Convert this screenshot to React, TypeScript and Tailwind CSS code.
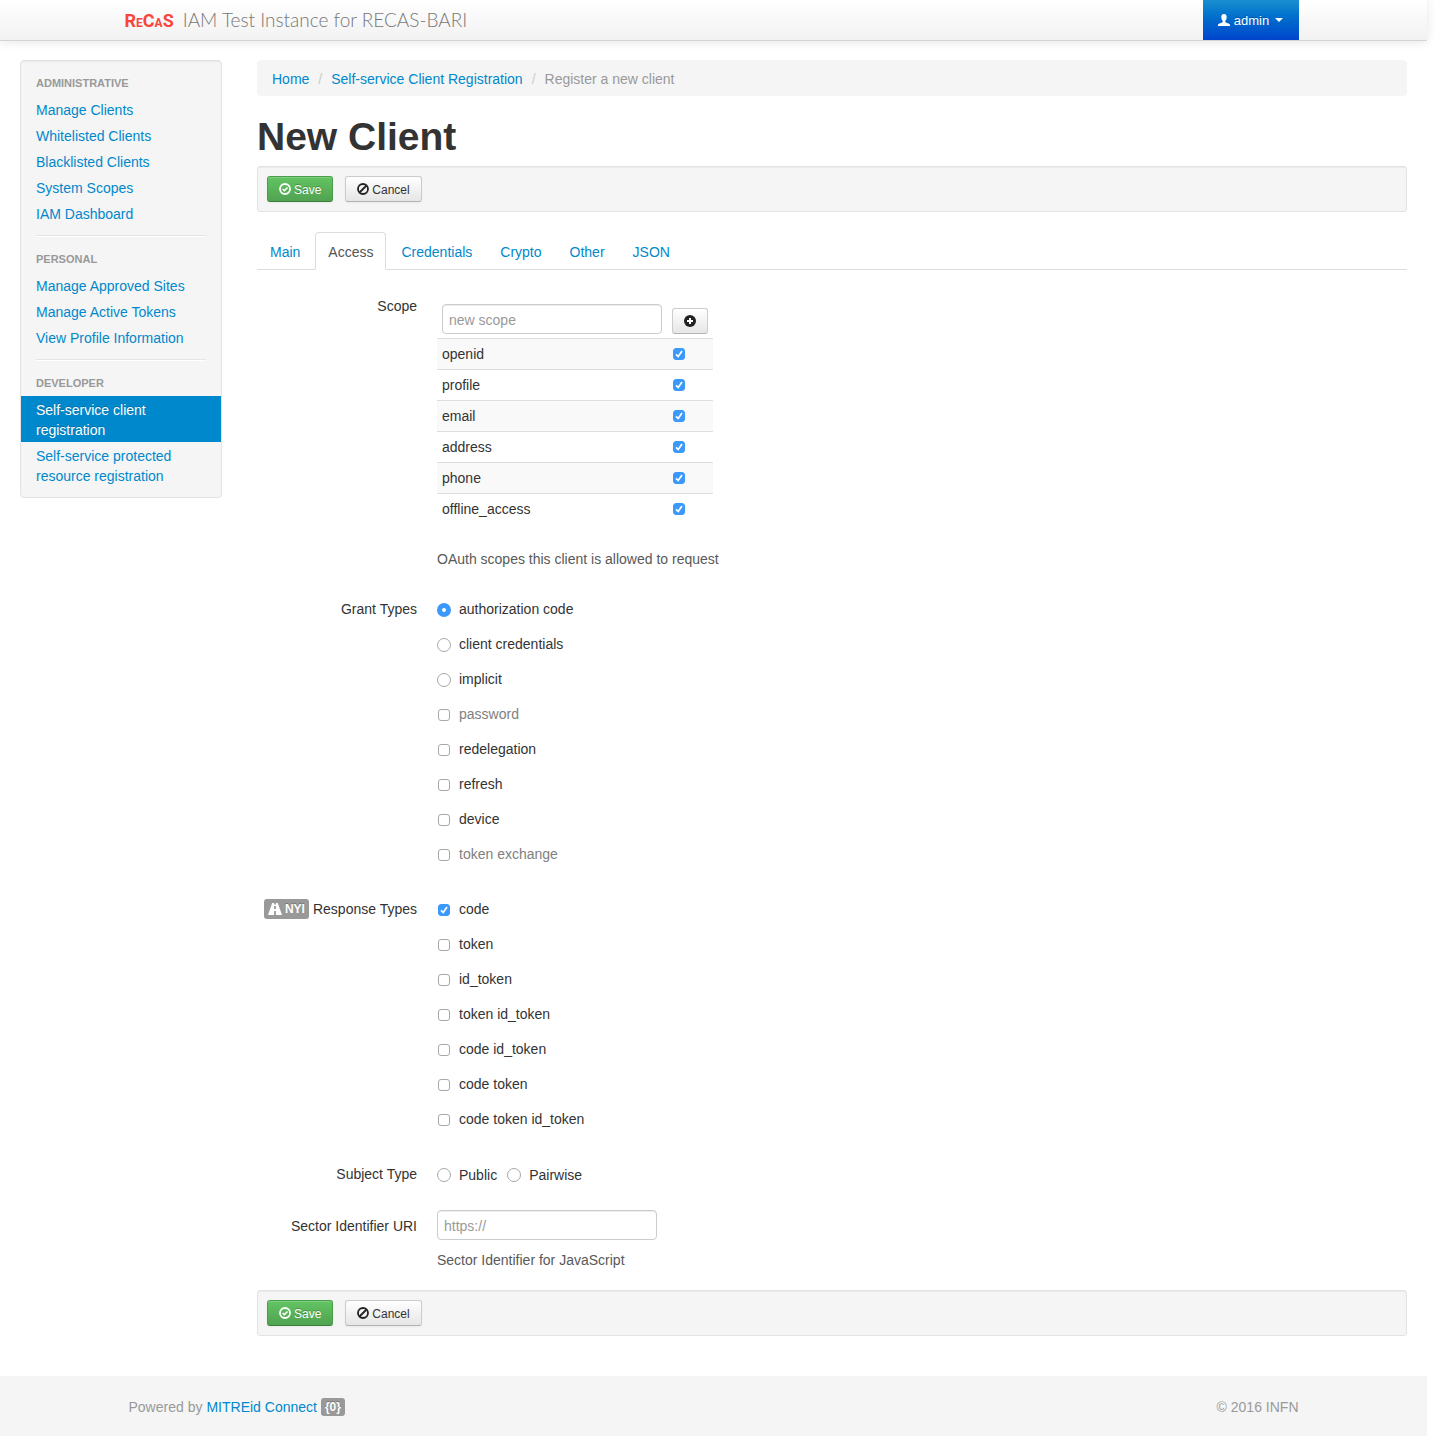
import React from "react";

const linkCls = "text-[#0088cc] hover:text-[#005580] hover:underline";

function UserIcon() {
  return (
    <svg className="h-3 w-3" viewBox="0 0 12 12" fill="#fff" aria-hidden="true">
      <path d="M6 0C4.300 0 3.300 1.200 3.300 2.900c0 1.700.7 3.300 1.500 4.100 0 .8-.1 1.200-.8 1.500C2.400 9.200.3 9.700 0 10.800V12h12v-1.200c-.3-1.100-2.400-1.600-4-2.300-.7-.3-.8-.7-.8-1.500.8-.8 1.500-2.400 1.500-4.100C8.700 1.200 7.700 0 6 0z" />
    </svg>
  );
}

function OkCircleIcon() {
  return (
    <svg className="h-3 w-3" viewBox="0 0 12 12" fill="none" stroke="#fff" aria-hidden="true">
      <circle cx="6" cy="6" r="5" strokeWidth="1.800" />
      <path d="M3.600 6l1.800 1.700L8.500 4.500" strokeWidth="1.600" />
    </svg>
  );
}

function BanIcon() {
  return (
    <svg className="h-3 w-3" viewBox="0 0 12 12" fill="none" stroke="#222" strokeWidth="1.800" aria-hidden="true">
      <circle cx="6" cy="6" r="5" />
      <path d="M2.500 9.500l7-7" />
    </svg>
  );
}

function PlusIcon() {
  return (
    <svg className="h-3 w-3" viewBox="0 0 12 12" aria-hidden="true">
      <circle cx="6" cy="6" r="6" fill="#222" />
      <path d="M6 3v6M3 6h6" stroke="#fff" strokeWidth="2" />
    </svg>
  );
}

function RoadIcon() {
  return (
    <svg className="h-3 w-3.5" viewBox="0 0 14 12" aria-hidden="true">
      <path d="M4.200 0h5.600L14 12H0z" fill="#fff" />
      <path d="M7 0v1.500M7 3v3M7 8v4" stroke="#999" strokeWidth="1.800" />
    </svg>
  );
}

function Check(props: React.InputHTMLAttributes<HTMLInputElement>) {
  return (
    <span className="grid h-3 w-3 shrink-0">
      <input
        type="checkbox"
        className="peer col-start-1 row-start-1 h-3 w-3 appearance-none rounded-[3px] border border-[#a8a8a8] bg-white checked:border-[#3b99fc] checked:bg-[#3b99fc]"
        {...props}
      />
      <svg
        className="pointer-events-none col-start-1 row-start-1 hidden h-3 w-3 peer-checked:block"
        viewBox="0 0 12 12"
        fill="none"
        stroke="#fff"
        strokeWidth="1.700"
        aria-hidden="true"
      >
        <path d="M3 6.300l2.200 2.200 3.800-5.600" />
      </svg>
    </span>
  );
}

function Radio(props: React.InputHTMLAttributes<HTMLInputElement>) {
  return (
    <input
      type="radio"
      className="h-3.5 w-3.5 shrink-0 appearance-none rounded-full border border-[#a8a8a8] bg-white checked:border-[5px] checked:border-[#3b99fc]"
      {...props}
    />
  );
}

function Actions() {
  return (
    <div className="flex gap-3 rounded-[3px] border border-[#e3e3e3] bg-[#f5f5f5] p-[9px] shadow-[inset_0_1px_1px_rgba(0,0,0,0.05)]">
      <button className="flex h-[26px] items-center gap-[3px] rounded-[3px] border border-[#4a9e4a] border-b-[#3a803a] bg-linear-to-b from-[#62c462] to-[#51a351] px-[11px] text-xs text-white shadow-[inset_0_1px_0_rgba(255,255,255,0.2),0_1px_2px_rgba(0,0,0,0.05)] [text-shadow:0_-1px_0_rgba(0,0,0,0.25)]">
        <OkCircleIcon />
        <span className="pt-px">Save</span>
      </button>
      <button className="flex h-[26px] items-center gap-[3px] rounded-[3px] border border-[#cccccc] border-b-[#b3b3b3] bg-linear-to-b from-white to-[#e6e6e6] px-[11px] text-xs text-[#333] shadow-[inset_0_1px_0_rgba(255,255,255,0.2),0_1px_2px_rgba(0,0,0,0.05)]">
        <BanIcon />
        <span className="pt-px">Cancel</span>
      </button>
    </div>
  );
}

const menu = [
  {
    title: "Administrative",
    items: ["Manage Clients", "Whitelisted Clients", "Blacklisted Clients", "System Scopes", "IAM Dashboard"],
  },
  { title: "Personal", items: ["Manage Approved Sites", "Manage Active Tokens", "View Profile Information"] },
  { title: "Developer", items: ["Self-service client registration", "Self-service protected resource registration"] },
];

function Sidebar() {
  return (
    <nav className="w-[202px] shrink-0 rounded-[4px] border border-[#e3e3e3] bg-[#f5f5f5] py-[9px] shadow-[inset_0_1px_1px_rgba(0,0,0,0.05)]">
      {menu.map((group, i) => (
        <section key={group.title}>
          {i > 0 && <hr className="mx-[15px] my-[9px] h-0.5 border-0 border-t border-[#e5e5e5] bg-white" />}
          <h2 className="px-[15px] py-[3px] text-[11px] leading-5 font-bold text-[#999] uppercase">{group.title}</h2>
          <ul>
            {group.items.map((item) => (
              <li key={item}>
                <a
                  href="#"
                  className={
                    item === "Self-service client registration"
                      ? "block bg-[#0088cc] px-[15px] pt-1 pb-0.5 text-white [text-shadow:0_-1px_0_rgba(0,0,0,0.2)]"
                      : "block px-[15px] pt-1 pb-0.5 text-[#0088cc] hover:text-[#005580]"
                  }
                >
                  {item}
                </a>
              </li>
            ))}
          </ul>
        </section>
      ))}
    </nav>
  );
}

function Group({ label, children }: { label: React.ReactNode; children: React.ReactNode }) {
  return (
    <div className="mb-5 flex gap-5">
      <div className="flex w-40 shrink-0 items-start justify-end gap-1 pt-[5px]">{label}</div>
      <div className="min-w-0 flex-1">{children}</div>
    </div>
  );
}

const scopes = ["openid", "profile", "email", "address", "phone", "offline_access"];
const grants = [
  "authorization code",
  "client credentials",
  "implicit",
  "password",
  "redelegation",
  "refresh",
  "device",
  "token exchange",
];
const responses = ["code", "token", "id_token", "token id_token", "code id_token", "code token", "code token id_token"];
const tabs = ["Main", "Access", "Credentials", "Crypto", "Other", "JSON"];
const inputCls =
  "h-[30px] w-[220px] rounded-[4px] border border-[#cccccc] bg-white px-1.5 pt-0.5 text-sm text-[#555] shadow-[inset_0_1px_1px_rgba(0,0,0,0.075)] placeholder:text-[#999]";

function AccessForm() {
  return (
    <form className="pt-[21px]">
      <Group label={<span>Scope</span>}>
        <table className="mt-2 w-[276px] border-collapse">
          <thead>
            <tr>
              <th className="px-[5px] pt-[5px] pb-1 text-left align-top font-normal">
                <input aria-label="New scope" placeholder="new scope" className={inputCls} />
              </th>
              <th className="px-[5px] pb-1 text-left align-bottom">
                <button
                  type="button"
                  aria-label="Add scope"
                  className="flex h-[26px] w-9 items-center justify-center rounded-[3px] border border-[#cccccc] border-b-[#b3b3b3] bg-linear-to-b from-white to-[#e6e6e6]"
                >
                  <PlusIcon />
                </button>
              </th>
            </tr>
          </thead>
          <tbody>
            {scopes.map((s) => (
              <tr key={s} className="border-t border-[#dddddd] odd:bg-[#f9f9f9]">
                <td className="px-[5px] py-[5px]">
                  <label htmlFor={"scope-" + s}>{s}</label>
                </td>
                <td className="px-1.5 py-[5px]">
                  <Check id={"scope-" + s} defaultChecked />
                </td>
              </tr>
            ))}
          </tbody>
        </table>
        <p className="mt-[25px] pb-[5px] text-[#595959]">OAuth scopes this client is allowed to request</p>
      </Group>

      <Group label={<span>Grant Types</span>}>
        {grants.map((g, i) => {
          const disabled = g === "password" || g === "token exchange";
          return (
            <label
              key={g}
              className={
                disabled
                  ? "mb-2.5 flex items-center pt-[5px] text-[#808080]"
                  : "mb-2.5 flex items-center pt-[5px]"
              }
            >
              <span className="flex h-5 w-[22px] items-center pt-0.5">
                {i < 3 ? (
                  <Radio name="grant" defaultChecked={i === 0} />
                ) : (
                  <span className="pl-px">
                    <Check disabled={disabled} />
                  </span>
                )}
              </span>
              {g}
            </label>
          );
        })}
      </Group>

      <Group
        label={
          <>
            <span className="flex h-5 items-center gap-[3px] rounded-[3px] bg-[#999] px-1 text-xs font-bold text-white [text-shadow:0_-1px_0_rgba(0,0,0,0.25)]">
              <RoadIcon />
              NYI
            </span>
            <span className="whitespace-nowrap">Response Types</span>
          </>
        }
      >
        {responses.map((r, i) => (
          <label key={r} className="mb-2.5 flex items-center pt-[5px]">
            <span className="flex h-5 w-[22px] items-center pt-0.5 pl-px">
              <Check defaultChecked={i === 0} />
            </span>
            {r}
          </label>
        ))}
      </Group>

      <Group label={<span>Subject Type</span>}>
        <div className="flex h-[31px] gap-2.5 pt-1.5">
          {["Public", "Pairwise"].map((s) => (
            <label key={s} className="flex items-start gap-2">
              <span className="flex h-5 items-center">
                <Radio name="subject" />
              </span>
              {s}
            </label>
          ))}
        </div>
      </Group>

      <Group
        label={
          <label htmlFor="sector" className="pt-px">
            Sector Identifier URI
          </label>
        }
      >
        <input id="sector" placeholder="https://" className={"block " + inputCls} />
        <p className="mt-2.5 text-[#595959]">Sector Identifier for JavaScript</p>
      </Group>
    </form>
  );
}

export default function App() {
  return (
    <div className="bg-white pr-[15px] font-['Liberation_Sans',Arial,sans-serif] text-sm leading-5 text-[#333]">
      <header className="border-b border-[#d4d4d4] bg-linear-to-b from-white to-[#f2f2f2] shadow-[0_1px_10px_rgba(0,0,0,0.1)]">
        <div className="mx-auto flex h-10 max-w-[1170px] justify-between">
          <a href="#" className="-ml-1 flex items-baseline gap-[9px] pt-2.5">
            <span className="font-[Roboto,sans-serif] text-lg leading-5 font-bold text-[#f9453a]">
              R<span className="text-xs">E</span>C<span className="text-xs">A</span>S
            </span>
            <span className="font-[Lato,sans-serif] text-[19px] leading-5 font-light text-[#777]">
              IAM Test Instance for RECAS-BARI
            </span>
          </a>
          <button className="flex w-24 items-center justify-center gap-1 bg-linear-to-b from-[#1a8fd0] via-[#0069cc] to-[#0044cc] text-[13px] text-white [text-shadow:0_-1px_0_rgba(0,0,0,0.25)]">
            <UserIcon />
            <span className="pt-px">admin</span>
            <svg className="ml-0.5 h-1 w-2" viewBox="0 0 8 4" fill="#fff" aria-hidden="true">
              <path d="M0 0h8L4 4z" />
            </svg>
          </button>
        </div>
      </header>

      <div className="flex items-start gap-[35px] px-5 pt-[19px]">
        <Sidebar />
        <main className="min-w-0 flex-1">
          <nav aria-label="Breadcrumb" className="flex rounded-[4px] bg-[#f5f5f5] px-[15px] pt-[9px] pb-[7px]">
            <a href="#" className={linkCls}>
              Home
            </a>
            <span className="px-[9px] text-[#ccc]">/</span>
            <a href="#" className={linkCls}>
              Self-service Client Registration
            </a>
            <span className="px-[9px] text-[#ccc]">/</span>
            <span className="text-[#999]">Register a new client</span>
          </nav>
          <h1 className="mt-[21px] mb-[9px] text-[39px] leading-10 font-bold">New Client</h1>
          <Actions />
          <div role="tablist" className="mt-5 flex gap-0.5 border-b border-[#dddddd]">
            {tabs.map((t) => (
              <button
                key={t}
                role="tab"
                aria-selected={t === "Access"}
                className={
                  t === "Access"
                    ? "-mb-px rounded-t-[4px] border border-[#dddddd] border-b-white bg-white px-3 pt-[9px] pb-[7px] text-[#555]"
                    : "-mb-px border border-transparent px-3 pt-[9px] pb-[7px] text-[#0088cc]"
                }
              >
                {t}
              </button>
            ))}
          </div>
          <AccessForm />
          <Actions />
        </main>
      </div>

      <footer className="mt-10 bg-[#f5f5f5] pt-[21px] pb-[19px] text-[#999]">
        <div className="mx-auto flex max-w-[1170px] justify-between">
          <p className="flex items-center gap-1">
            Powered by
            <a href="#" className="flex items-center gap-1 text-[#0088cc]">
              MITREid Connect
              <span className="rounded-[3px] bg-[#999] px-1 text-xs leading-[18px] font-bold text-white [text-shadow:0_-1px_0_rgba(0,0,0,0.25)]">
                {"{0}"}
              </span>
            </a>
          </p>
          <p>© 2016 INFN</p>
        </div>
      </footer>
    </div>
  );
}
